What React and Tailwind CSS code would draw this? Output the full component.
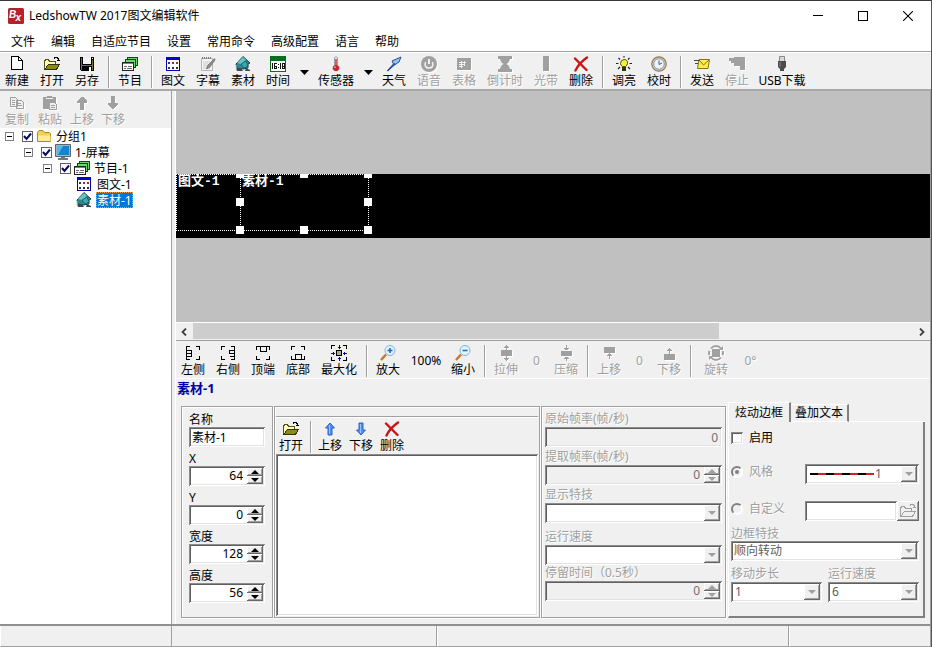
/**
 * LedshowTW editor window
 * Menu, toolbars, program tree, screen canvas and the area property panels.
 */
import React, { useState } from 'react';

const MENUS = ['文件', '编辑', '自适应节目', '设置', '常用命令', '高级配置', '语言', '帮助'];

const SUNKEN = 'shadow-[inset_1px_1px_#8c8c8c,inset_-1px_-1px_#ffffff,inset_2px_2px_#5f5f5f,inset_-2px_-2px_#e3e3e3]';
const RAISED = 'bg-[#f0f0f0] shadow-[inset_-1px_-1px_#696969,inset_1px_1px_#ffffff,inset_-2px_-2px_#a0a0a0]';
const GROOVE = 'border border-[#a0a0a0] shadow-[inset_1px_1px_#ffffff,1px_1px_#ffffff]';
const ETCHED = 'text-[#a0a0a0] [text-shadow:1px_1px_0_#ffffff]';

function Svg({ children, crisp = true, size = 16 }) {
  return (
    <svg width={size} height={size} viewBox="0 0 16 16" fill="none" aria-hidden="true"
      className="shrink-0" shapeRendering={crisp ? 'crispEdges' : 'auto'}>
      {children}
    </svg>
  );
}

/* ---------- icons ---------- */

const icons = {
  logo: (
    <Svg crisp={false}>
      <rect width="16" height="16" rx="1.5" fill="#b8202a" />
      <g fill="#fff" fontFamily="Liberation Sans, sans-serif" fontWeight="bold" fontStyle="italic">
        <text x="1" y="10" fontSize="10">B</text>
        <text x="7.500" y="13" fontSize="10">x</text>
      </g>
    </Svg>
  ),
  newFile: (
    <Svg>
      <path d="M3 1h7l3 3v10H3z" fill="#fff" />
      <path d="M2.500 .5h7l4 4v9h-11zM9.500 .5v4h4" stroke="#000" />
    </Svg>
  ),
  open: (
    <Svg>
      <path d="M1 4h4l1 1h6v3H5l-4 6z" fill="#ffffc0" />
      <path d="M.5 13.500v-9h1v-1h3v1h1v1h6v2.500" stroke="#55550a" />
      <path d="M1 13.500L4.500 8H15.500l-3 5.500z" fill="#8c8c14" stroke="#33330a" />
      <path d="M9.500 2.500h1v-1h3v1h1v2M12.500 4.500h3" stroke="#000" />
    </Svg>
  ),
  save: (
    <Svg>
      <path d="M1 1h14v14H2l-1-1z" fill="#000" />
      <path d="M2 2h1v12H2zM13 4h1v10h-1zM3 9h10v1H3z" fill="#77771c" />
      <path d="M4 1h8v7H4z" fill="#f4f4f4" />
      <path d="M10 11h2v4h-2zM13 2h1v1h-1z" fill="#fff" />
    </Svg>
  ),
  program: (
    <Svg>
      <path d="M5.500 1.500h10v8h-10z" fill="#70d470" stroke="#064d10" />
      <path d="M3 3.500h10.500v8H3z" fill="#70d470" stroke="#064d10" />
      <path d="M.5 6.500h11v8H.5z" fill="#fff" stroke="#222" />
      <path d="M1 7h10v1H1z" fill="#3fae3f" />
      <path d="M2 10.500h3M6 10.500h4M2 12.500h2M5 12.500h5" stroke="#666" />
    </Svg>
  ),
  grid: (
    <Svg>
      <path d="M1.500 1.500h13v13h-13z" fill="#fff" stroke="#0000a8" />
      <path d="M1 1h14v3H1z" fill="#0000d0" />
      <path d="M3 6h2v2H3zM3 11h2v2H3z" fill="#303080" />
      <path d="M7 6h2v2H7zM11 6h2v2h-2z" fill="#b02040" />
      <path d="M7 11h2v2H7zM11 11h2v2h-2z" fill="#203060" />
    </Svg>
  ),
  subtitle: (
    <Svg crisp={false}>
      <path d="M1.500 2.500h11v12h-11z" fill="#f4f4f4" stroke="#b4b4b4" />
      <path d="M2 2h10" stroke="#777" strokeWidth="2" strokeDasharray="1 1" />
      <path d="M3 6h7M3 8h5M3 10h5M3 12h7" stroke="#ccc" />
      <path d="M14.500 2.500L8 9l-1.500 4L10 11l5-7z" fill="#909090" stroke="#666" strokeWidth=".7" />
    </Svg>
  ),
  material: (
    <Svg crisp={false}>
      <path d="M8 .5L15 7l-2 1v4l-5 1-6-1-1-4z" fill="#2b8994" stroke="#17444d" />
      <path d="M8 1L2 7l4 1 5-4z" fill="#69c2c4" />
      <path d="M6 8l5-3 2 5-4 2z" fill="#3da9ae" stroke="#17444d" strokeWidth=".6" />
      <path d="M1 12h5l2 3H2zM11 12l4 2v1h-5z" fill="#404850" />
      <path d="M1 9v4" stroke="#b0d8da" />
    </Svg>
  ),
  clock: (
    <Svg>
      <path d="M.5 .5h15v15H.5z" fill="#fff" stroke="#126a22" />
      <path d="M0 0h16v5H0z" fill="#0d6b1e" />
      <path d="M2.500 7v6M5 7.500h2M4.500 7v6M5 10.500h2M5 12.500h2M6.500 10v3M8.500 8v1M8.500 11v1M10.500 7v6M12.500 7.500h2v5h-2zM12 10.500h2" stroke="#111" />
    </Svg>
  ),
  thermometer: (
    <Svg crisp={false}>
      <path d="M6.500 1.500q1.500-1.500 3 0v8q2.500 1.500 1.500 4q-3 3-6 0q-1-2.500 1.500-4z" fill="#f4f4f8" stroke="#9a9aa8" />
      <path d="M8 3v8" stroke="#d03030" strokeWidth="1.500" />
      <circle cx="8" cy="12" r="3" fill="#cc2430" />
      <circle cx="7" cy="11.200" r=".9" fill="#f4a0a0" />
    </Svg>
  ),
  weather: (
    <Svg crisp={false}>
      <path d="M1.500 14.500L7.500 8 6 5 15 1l-2 5-4.500 3z" fill="#8fc4f4" stroke="#234f9c" strokeLinejoin="round" />
      <path d="M1.500 15L9 7.500" stroke="#234f9c" strokeWidth="1.500" />
    </Svg>
  ),
  voice: (
    <Svg crisp={false}>
      <circle cx="8" cy="8" r="8" fill="#a0a0a0" />
      <path d="M4.500 6q-1.500 6 3.500 6q5 0 3.500-6" stroke="#f0f0f0" strokeWidth="1.500" />
      <path d="M8 3v5" stroke="#f0f0f0" strokeWidth="2" />
    </Svg>
  ),
  table: (
    <Svg>
      <path d="M1 2h14v12H1z" fill="#a0a0a0" />
      <path d="M3 6.500h7M3 8.500h6M3 10.500h4M5.500 5v7M8.500 5v5" stroke="#f0f0f0" />
    </Svg>
  ),
  hourglass: (
    <Svg crisp={false}>
      <path d="M1 0h14v3h-2q-1 4-3.500 5q2.500 1 3.500 5h2v3H1v-3h2q1-4 3.500-5Q4 7 3 3H1z" fill="#a0a0a0" />
    </Svg>
  ),
  band: (
    <Svg><path d="M5 0h6v15H5z" fill="#a0a0a0" /></Svg>
  ),
  remove: (
    <Svg crisp={false}>
      <path d="M2 2.500L13.500 14M14 1.500Q6 7 2.500 14.500" stroke="#c81414" strokeWidth="2.400" strokeLinecap="round" />
    </Svg>
  ),
  bulb: (
    <Svg crisp={false}>
      <path d="M8 3.500q4 .3 3.500 4-.4 1.500-1.800 3H6.300Q4.500 9 4.500 7.500 4.500 4 8 3.500z" fill="#f6f23a" stroke="#55550a" />
      <path d="M6 11h4v4H6z" fill="#33330a" />
      <path d="M8 0v1.500M2.500 2L4 3.500M13.500 2L12 3.500M0 7.500h2.500M13.500 7.500H16M2 13l2-2M14 13l-2-2" stroke="#222" strokeWidth="1.200" />
    </Svg>
  ),
  sync: (
    <Svg crisp={false}>
      <circle cx="8" cy="8" r="7.200" fill="#e0c28c" stroke="#8b7d68" strokeWidth="1.200" />
      <circle cx="8" cy="8" r="5.200" fill="#eaf5fd" stroke="#8ca4bc" />
      <path d="M8 4.500V8.500l3-1.500" stroke="#3d5c84" />
    </Svg>
  ),
  send: (
    <Svg crisp={false}>
      <path d="M5 3.500h10.500l-1.500 9H3.500z" fill="#fbec4c" stroke="#857414" />
      <path d="M5 4l4.500 5L15 4" stroke="#857414" />
      <path d="M0 4.500h5M1 7.500h3" stroke="#444" />
    </Svg>
  ),
  stop: (
    <Svg><path d="M0 2h5V1h11v13h-5v-4H5V7H2V5H0z" fill="#a0a0a0" /></Svg>
  ),
  usb: (
    <Svg crisp={false}>
      <path d="M5.500 .5h5v5h-5z" fill="#d8d8d8" stroke="#888" />
      <path d="M4 5h8v6l-2 2v2H6v-2l-2-2z" fill="#4b4b50" />
      <path d="M6 6v5" stroke="#88888e" />
    </Svg>
  ),
  copy: (
    <Svg>
      <path d="M1.500 2.500h5l2 2v7h-7zM7.500 5.500h5l2 2v6h-7z" fill="#f0f0f0" stroke="#a0a0a0" />
      <path d="M3 5.500h3M3 7.500h3M3 9.500h3M9 8.500h3M9 10.500h4" stroke="#a0a0a0" />
    </Svg>
  ),
  paste: (
    <Svg>
      <path d="M1 2h4V1h5v1h4v12H1z" fill="#a0a0a0" />
      <path d="M7.500 7.500h5l2 2v5h-7z" fill="#f0f0f0" stroke="#a0a0a0" />
      <path d="M4 3.500h7" stroke="#f0f0f0" />
      <path d="M9 10.500h4M9 12.500h4" stroke="#a0a0a0" />
    </Svg>
  ),
  upGray: <Svg><path d="M8 2h1l4 4v2h-3v7H6V8H3V6z" fill="#a0a0a0" /></Svg>,
  downGray: <Svg><path d="M6 1h4v7h3v1l-4 5H7L3 9V8h3z" fill="#a0a0a0" /></Svg>,
  upBlue: (
    <Svg crisp={false}>
      <path d="M8 2l4.500 5H10v7H6V7H3.500z" fill="#4f8df0" stroke="#2e64c4" strokeLinejoin="round" />
      <path d="M7.500 4v9" stroke="#9cc4fa" />
    </Svg>
  ),
  downBlue: (
    <Svg crisp={false}>
      <path d="M8 14l4.500-5H10V2H6v7H3.500z" fill="#4f8df0" stroke="#2e64c4" strokeLinejoin="round" />
      <path d="M7.500 3v9" stroke="#9cc4fa" />
    </Svg>
  ),
  folder: (
    <Svg crisp={false}>
      <path d="M1.500 13.500v-9l1.500-2h4l1.500 2h5l1 1v8z" fill="#f2cf58" stroke="#b08a1e" />
      <path d="M2 7.500h12.500v5.500H2z" fill="#fdeb9a" />
    </Svg>
  ),
  monitor: (
    <Svg crisp={false}>
      <path d="M.5 .5h15v12H.5z" fill="#9db4c4" stroke="#52687a" />
      <path d="M2 2h12v9H2z" fill="#1484cc" />
      <path d="M2 2h6L3 11H2z" fill="#4cbcea" />
      <path d="M6 13h4v1h3v2H3v-2h3z" fill="#6c7c88" />
    </Svg>
  ),
  alignLeft: (
    <Svg>
      <path d="M5 1.500H1.500v13H5M11 1.500h3.500V5M14.500 11v3.500H11M2 5.500h4.500v6H2M2 8.500h4" stroke="#000" />
    </Svg>
  ),
  alignRight: (
    <Svg>
      <path d="M11 1.500h3.500v13H11M5 1.500H1.500V5M1.500 11v3.500H5M14 5.500H9.500v3H14M9.500 11.500H14" stroke="#000" />
    </Svg>
  ),
  alignTop: (
    <Svg>
      <path d="M1.500 5V1.500h13V5M1.500 11v3.500H5M14.500 11v3.500H11M5.500 2v4.500h6V2" stroke="#000" />
    </Svg>
  ),
  alignBottom: (
    <Svg>
      <path d="M1.500 11v3.500h13V11M1.500 5V1.500H5M14.500 5V1.500H11M5.500 14V9.500h6V14" stroke="#000" />
    </Svg>
  ),
  maximize: (
    <Svg>
      <path d="M4 .5H.5V4M.5 12v3.500H4M12 .5h3.500V4M15.500 12v3.500H12" stroke="#000" />
      <path d="M5.500 5.500h5v5h-5z" fill="#a8a8a8" stroke="#000" />
      <path d="M8 0v4M6.500 2.500h3M8 12v4M6.500 13.500h3M0 8h4M2.500 6.500v3M12 8h4M13.500 6.500v3" stroke="#0a0a90" />
    </Svg>
  ),
  zoomIn: (
    <Svg crisp={false}>
      <path d="M6 9.500L1 15" stroke="#c87828" strokeWidth="2.500" />
      <circle cx="10" cy="5.500" r="5" fill="#e2f3fd" stroke="#7ab2dc" />
      <path d="M7.500 5.500h5M10 3v5" stroke="#1c68b4" strokeWidth="1.500" />
    </Svg>
  ),
  zoomOut: (
    <Svg crisp={false}>
      <path d="M6 9.500L1 15" stroke="#c87828" strokeWidth="2.500" />
      <circle cx="10" cy="5.500" r="5" fill="#e2f3fd" stroke="#7ab2dc" />
      <path d="M7.500 5.500h5" stroke="#1c68b4" strokeWidth="1.500" />
    </Svg>
  ),
  stretch: (
    <Svg>
      <path d="M3 5h11v6H3zM8 0h1v5H8zM7 1h3v1H7zM6 2h5v1H6zM8 11h1v5H8zM7 14h3v1H7zM6 13h5v1H6z" fill="#a0a0a0" />
    </Svg>
  ),
  compress: (
    <Svg>
      <path d="M3 6h11v5H3zM8 0h1v5H8zM7 4h3v1H7zM6 3h5v1H6zM8 12h1v4H8zM7 12h3v1H7zM6 13h5v1H6z" fill="#a0a0a0" />
    </Svg>
  ),
  shiftUp: (
    <Svg><path d="M3 2h11v6H3zM8 8h1v6H8zM7 9h3v1H7zM6 10h5v1H6z" fill="#a0a0a0" /></Svg>
  ),
  shiftDown: (
    <Svg><path d="M3 9h11v6H3zM8 3h1v6H8zM7 4h3v1H7zM6 5h5v1H6z" fill="#a0a0a0" /></Svg>
  ),
  rotate: (
    <Svg crisp={false}>
      <path d="M4 4h8v8H4z" fill="#a0a0a0" />
      <path d="M3 3.500Q5 1 8 1t5 2.500M3 12.500Q5 15 8 15t5-2.500" stroke="#a0a0a0" strokeWidth="2" />
      <path d="M1.500 6q-1 2 0 4M14.500 6q1 2 0 4" stroke="#a0a0a0" strokeWidth="2" />
      <path d="M15 1v4h-4zM1 15v-4h4z" fill="#a0a0a0" />
    </Svg>
  ),
  folderGray: (
    <Svg>
      <path d="M.5 13.500v-9h1v-1h3v1h1v1h6v2.500M1 13.500L4.500 8H15.500l-3 5.500z" stroke="#a0a0a0" />
      <path d="M9.500 2.500h1v-1h3v1h1v2M12.500 4.500h3" stroke="#a0a0a0" />
    </Svg>
  ),
};

/* ---------- toolbar pieces ---------- */

function ToolButton({ icon, label, disabled, width = 'w-[35px]' }) {
  return (
    <button disabled={disabled}
      className={`flex shrink-0 flex-col items-center pr-px ${width} ${disabled ? ETCHED : ''}`}>
      <span className={disabled ? '[filter:drop-shadow(1px_1px_0_#ffffff)]' : ''}>{icons[icon]}</span>
      <span className="h-4 leading-[18px] whitespace-nowrap">{label}</span>
    </button>
  );
}

function Separator() {
  return (
    <span className="flex w-2 shrink-0 justify-center self-stretch">
      <span className="w-0.5 border-l border-[#a0a0a0] bg-white" />
    </span>
  );
}

function DropArrow({ label }) {
  return (
    <button aria-label={label} className="flex w-[17px] shrink-0 items-center justify-center">
      <svg width="9" height="5" viewBox="0 0 9 5" aria-hidden="true"><path d="M0 0h9L4.500 5z" /></svg>
    </button>
  );
}

/* ---------- form pieces ---------- */

function Spinner({ id, value, disabled }) {
  const [v, setV] = useState(value);
  const fill = disabled ? '#a0a0a0' : '#000000';
  return (
    <div className={`flex h-5 p-0.5 ${SUNKEN} ${disabled ? 'bg-[#f0f0f0]' : 'bg-white'}`}>
      <input id={id} value={v} disabled={disabled} onChange={e => setV(Number(e.target.value) || 0)}
        className={`w-0 flex-1 bg-transparent pr-1 text-right leading-4 outline-none ${disabled ? 'text-[#707070]' : ''}`} />
      <div className="flex w-4 flex-col">
        {[1, -1].map(step => (
          <button key={step} disabled={disabled} onClick={() => setV(v + step)} aria-label={step > 0 ? '+' : '-'}
            className={`flex flex-1 items-center justify-center ${RAISED}`}>
            <svg width="8" height="4" viewBox="0 0 8 4" aria-hidden="true">
              <path d={step > 0 ? 'M0 4h8L4 0z' : 'M0 0h8L4 4z'} fill={fill} />
            </svg>
          </button>
        ))}
      </div>
    </div>
  );
}

function Select({ id, value = '', className = 'pl-1', children, label }) {
  return (
    <div className={`relative flex h-5 bg-white p-0.5 ${SUNKEN}`}>
      <select id={id} disabled aria-label={label} defaultValue={value}
        className={`min-w-0 flex-1 appearance-none bg-transparent leading-4 text-[#606060] opacity-100 outline-none ${className}`}>
        <option value={value}>{value}</option>
      </select>
      {children}
      <span className={`flex w-4 items-center justify-center ${RAISED}`}>
        <svg width="8" height="4" viewBox="0 0 8 4" aria-hidden="true"><path d="M0 0h8L4 4z" fill="#a0a0a0" /></svg>
      </span>
    </div>
  );
}

/* ---------- tree ---------- */

function TreeCheck({ label }) {
  return (
    <span className="grid shrink-0 place-items-center">
      <input type="checkbox" defaultChecked aria-label={label}
        className="peer col-start-1 row-start-1 size-[11px] appearance-none border border-[#606060] bg-white" />
      <svg width="9" height="9" viewBox="0 0 9 9" fill="none" aria-hidden="true"
        className="pointer-events-none invisible col-start-1 row-start-1 peer-checked:visible">
        <path d="M1 4l2.500 3L8 1.500" stroke="#0a0a60" strokeWidth="2" />
      </svg>
    </span>
  );
}

function TreeBranch({ indent, icon, label }) {
  return (
    <div className={`flex h-4 items-center ${indent}`}>
      <button aria-label="-" className="mr-2 flex size-[9px] items-center justify-center border border-[#808080] bg-white">
        <span className="h-px w-[5px] bg-black" />
      </button>
      <TreeCheck label={label} />
      <span className="mr-1 ml-[3px]">{icons[icon]}</span>
      <span className="h-4 leading-[18px]">{label}</span>
    </div>
  );
}

function TreeLeaf({ icon, label, selected }) {
  return (
    <button className="flex h-4 items-center pl-[76px]">
      {icons[icon]}
      <span className={`ml-1 h-4 px-px leading-[18px] ${selected ? 'bg-[#0078d7] text-white outline-1 -outline-offset-1 outline-dotted outline-[#e8a050]' : ''}`}>
        {label}
      </span>
    </button>
  );
}

function Sidebar() {
  return (
    <aside className="flex w-[172px] shrink-0 flex-col border-r border-[#a0a0a0] bg-white">
      <div className="flex bg-[#f0f0f0] pt-1 pb-px pl-px">
        <ToolButton icon="copy" label="复制" disabled width="w-[33px]" />
        <ToolButton icon="paste" label="粘贴" disabled width="w-[33px]" />
        <ToolButton icon="upGray" label="上移" disabled width="w-[31px]" />
        <ToolButton icon="downGray" label="下移" disabled width="w-[31px]" />
      </div>
      <div className="flex flex-col items-start">
        <TreeBranch indent="pl-[5px]" icon="folder" label="分组1" />
        <TreeBranch indent="pl-6" icon="monitor" label="1-屏幕" />
        <TreeBranch indent="pl-[43px]" icon="program" label="节目-1" />
        <TreeLeaf icon="grid" label="图文-1" />
        <TreeLeaf icon="material" label="素材-1" selected />
      </div>
    </aside>
  );
}

/* ---------- canvas ---------- */

const HANDLES = [
  '-top-[5px] -left-[5px]', '-top-[5px] left-[59px]', '-top-[5px] -right-1',
  'top-[23px] -left-[5px]', 'top-[23px] -right-1',
  '-bottom-1 -left-[5px]', '-bottom-1 left-[59px]', '-bottom-1 -right-1',
];

function Canvas() {
  return (
    <div className="flex flex-1 flex-col justify-center bg-[#c0c0c0] pb-px">
      <div className="relative h-16 overflow-hidden bg-black font-['Liberation_Mono','Noto_Sans_CJK_SC',monospace] text-[13px] leading-[14px] font-bold text-white">
        <div className="absolute top-0 left-0 h-[57px] w-[65px] border border-dotted border-white pl-px">图文-1</div>
        <div className="absolute top-0 left-16 h-[57px] w-[129px] border border-dotted border-white pl-px">
          素材-1
          {HANDLES.map(pos => <span key={pos} className={`absolute size-2 bg-white ${pos}`} />)}
        </div>
      </div>
    </div>
  );
}

function ScrollBar() {
  return (
    <div className="flex h-[18px] border-t border-white">
      <button aria-label="<" className="flex w-4 items-center justify-center">
        <svg width="6" height="8" viewBox="0 0 6 8" fill="none"><path d="M5 .5L1.500 4 5 7.500" stroke="#404040" strokeWidth="1.800" /></svg>
      </button>
      <div className="flex-1 pl-px"><div className="h-4 w-[73%] bg-[#cdcdcd]" /></div>
      <button aria-label=">" className="flex w-4 items-center justify-center">
        <svg width="6" height="8" viewBox="0 0 6 8" fill="none"><path d="M1 .5L4.500 4 1 7.500" stroke="#404040" strokeWidth="1.800" /></svg>
      </button>
    </div>
  );
}

function CanvasTools() {
  return (
    <div className="flex border-t border-b border-t-[#a0a0a0] border-b-white pt-1 pb-px">
      <ToolButton icon="alignLeft" label="左侧" />
      <ToolButton icon="alignRight" label="右侧" />
      <ToolButton icon="alignTop" label="顶端" />
      <ToolButton icon="alignBottom" label="底部" />
      <ToolButton icon="maximize" label="最大化" width="w-[47px]" />
      <Separator />
      <ToolButton icon="zoomIn" label="放大" />
      <span className="flex w-10 items-center justify-center">100%</span>
      <ToolButton icon="zoomOut" label="缩小" />
      <Separator />
      <ToolButton icon="stretch" label="拉伸" disabled />
      <span className={`flex w-[25px] items-center justify-center ${ETCHED}`}>0</span>
      <ToolButton icon="compress" label="压缩" disabled />
      <Separator />
      <ToolButton icon="shiftUp" label="上移" disabled />
      <span className={`flex w-[25px] items-center justify-center ${ETCHED}`}>0</span>
      <ToolButton icon="shiftDown" label="下移" disabled />
      <Separator />
      <ToolButton icon="rotate" label="旋转" disabled width="w-[43px]" />
      <span className={`flex w-[25px] items-center justify-center ${ETCHED}`}>0°</span>
    </div>
  );
}

/* ---------- property panels ---------- */

function PositionPanel() {
  const [name, setName] = useState('素材-1');
  const fields = [['X', 64], ['Y', 0], ['宽度', 128], ['高度', 56]];
  return (
    <section className={`mt-1 w-[92px] shrink-0 px-[7px] pt-1 ${GROOVE}`}>
      <label htmlFor="name" className="block h-4 leading-[18px]">名称</label>
      <input id="name" value={name} onChange={e => setName(e.target.value)}
        className={`block h-5 w-full bg-white px-[3px] leading-4 outline-none ${SUNKEN}`} />
      {fields.map(([label, value]) => (
        <div key={label} className="pt-[3px]">
          <label htmlFor={label} className="block h-4 leading-[18px]">{label}</label>
          <Spinner id={label} value={value} />
        </div>
      ))}
    </section>
  );
}

function FilePanel() {
  return (
    <section className={`mt-1 flex min-w-0 flex-1 flex-col p-px ${GROOVE}`}>
      <div className="h-2" />
      <div className="flex border-t border-[#a0a0a0] pt-1 shadow-[inset_0_1px_#ffffff]">
        <ToolButton icon="open" label="打开" width="w-[31px]" />
        <Separator />
        <ToolButton icon="upBlue" label="上移" width="w-[31px]" />
        <ToolButton icon="downBlue" label="下移" width="w-[31px]" />
        <ToolButton icon="remove" label="删除" width="w-[31px]" />
      </div>
      <div className={`mt-px flex-1 bg-white ${SUNKEN}`} />
    </section>
  );
}

function EffectPanel() {
  const label = `block h-4 leading-4 ${ETCHED}`;
  return (
    <section className={`mt-1 w-[185px] shrink-0 px-[3px] pt-1 pb-4 ${GROOVE}`}>
      <label htmlFor="srcRate" className={label}>原始帧率(帧/秒)</label>
      <input id="srcRate" disabled defaultValue="0"
        className={`block h-5 w-full bg-[#f0f0f0] px-1 text-right leading-4 text-[#707070] ${SUNKEN}`} />
      <div className="pt-0.5">
        <label htmlFor="rate" className={label}>提取帧率(帧/秒)</label>
        <Spinner id="rate" value={0} disabled />
      </div>
      <div className="pt-0.5">
        <label htmlFor="effect" className={label}>显示特技</label>
        <Select id="effect" />
      </div>
      <div className="pt-1.5">
        <label htmlFor="speed" className={label}>运行速度</label>
        <Select id="speed" />
      </div>
      <label htmlFor="stay" className={label}>停留时间（0.5秒）</label>
      <Spinner id="stay" value={0} disabled />
    </section>
  );
}

function Radio({ id, label, checked }) {
  return (
    <label htmlFor={id} className={`flex w-[74px] shrink-0 items-center gap-1.5 pb-1 ${ETCHED}`}>
      <span className="grid place-items-center">
        <input id={id} type="radio" name="border" disabled defaultChecked={checked}
          className="peer col-start-1 row-start-1 size-3 appearance-none rounded-full border-2 border-t-[#808080] border-r-white border-b-white border-l-[#808080] bg-[#f0f0f0]" />
        <span className="invisible col-start-1 row-start-1 size-1 rounded-full bg-[#808080] peer-checked:visible" />
      </span>
      {label}
    </label>
  );
}

function BorderPanel() {
  return (
    <section className="flex w-[197px] shrink-0 flex-col">
      <div className="flex items-end" role="tablist">
        <button role="tab" aria-selected="true"
          className="h-5 w-[63px] shrink-0 border-t border-r-2 border-l border-t-white border-r-[#808080] border-l-white leading-4">
          炫动边框
        </button>
        <button role="tab" aria-selected="false"
          className="h-[18px] w-[58px] shrink-0 border-t border-r-2 border-b border-t-white border-r-[#808080] border-b-white leading-4">
          叠加文本
        </button>
        <span className="flex-1 border-b border-white" />
      </div>
      <div className="flex flex-1 flex-col border-r-2 border-b-2 border-l border-r-[#808080] border-b-[#808080] border-l-white pr-1 pl-0.5">
        <label className="mt-2 flex h-4 items-center gap-1.5">
          <input type="checkbox" className={`size-3 appearance-none bg-white ${SUNKEN}`} />
          启用
        </label>
        <div className="mt-[18px] flex items-center">
          <Radio id="style" label="风格" checked />
          <div className="min-w-0 flex-1">
            <Select value="1" label="风格" className="pl-[68px]">
              <svg width="64" height="2" viewBox="0 0 64 2" className="absolute top-[9px] left-[5px]" aria-hidden="true">
                <path d="M0 1h64" stroke="#000" strokeWidth="2" />
                <path d="M8 1h56" stroke="#d81e1e" strokeWidth="2" strokeDasharray="8 8" />
              </svg>
            </Select>
          </div>
        </div>
        <div className="mt-[17px] flex items-center">
          <Radio id="custom" label="自定义" />
          <input disabled aria-label="自定义" className={`h-5 w-0 flex-1 bg-white ${SUNKEN}`} />
          <button disabled aria-label="打开" className={`flex h-5 w-[22px] items-center justify-center ${RAISED}`}>{icons.folderGray}</button>
        </div>
        <label htmlFor="trick" className={`mt-1 h-4 leading-[18px] ${ETCHED}`}>边框特技</label>
        <Select id="trick" value="顺向转动" className="pl-px" />
        <div className="mt-1 grid grid-cols-2 gap-1.5">
          <div>
            <label htmlFor="step" className={`block h-[17px] leading-[18px] ${ETCHED}`}>移动步长</label>
            <Select id="step" value="1" className="pl-0.5" />
          </div>
          <div>
            <label htmlFor="runSpeed" className={`block h-[17px] leading-[18px] ${ETCHED}`}>运行速度</label>
            <Select id="runSpeed" value="6" className="pl-0.5" />
          </div>
        </div>
      </div>
    </section>
  );
}

function TitleBar() {
  return (
    <header className="flex h-[29px] items-center pr-px pl-2">
      {icons.logo}
      <h1 className="ml-[5px] flex-1 text-[12px]">LedshowTW 2017图文编辑软件</h1>
      <button aria-label="最小化" className="flex w-[45px] justify-center"><span className="h-px w-2.5 bg-black" /></button>
      <button aria-label="最大化" className="flex w-[45px] justify-center"><span className="size-2.5 border border-black" /></button>
      <button aria-label="关闭" className="flex w-[45px] justify-center">
        <svg width="10" height="10" viewBox="0 0 10 10"><path d="M0 0l10 10M10 0L0 10" stroke="#000" strokeWidth="1.100" /></svg>
      </button>
    </header>
  );
}

function MainToolbar() {
  return (
    <div className="flex border-t border-b-2 border-t-[#a0a0a0] border-b-[#a8a8a8] bg-[#f0f0f0] pt-1 pb-px shadow-[inset_0_1px_#ffffff]">
      <ToolButton icon="newFile" label="新建" />
      <ToolButton icon="open" label="打开" />
      <ToolButton icon="save" label="另存" />
      <Separator />
      <ToolButton icon="program" label="节目" />
      <Separator />
      <ToolButton icon="grid" label="图文" />
      <ToolButton icon="subtitle" label="字幕" />
      <ToolButton icon="material" label="素材" />
      <ToolButton icon="clock" label="时间" />
      <DropArrow label="时间" />
      <ToolButton icon="thermometer" label="传感器" width="w-[47px]" />
      <DropArrow label="传感器" />
      <ToolButton icon="weather" label="天气" />
      <ToolButton icon="voice" label="语音" disabled />
      <ToolButton icon="table" label="表格" disabled />
      <ToolButton icon="hourglass" label="倒计时" disabled width="w-[47px]" />
      <ToolButton icon="band" label="光带" disabled />
      <ToolButton icon="remove" label="删除" />
      <Separator />
      <ToolButton icon="bulb" label="调亮" />
      <ToolButton icon="sync" label="校时" />
      <Separator />
      <ToolButton icon="send" label="发送" />
      <ToolButton icon="stop" label="停止" disabled />
      <ToolButton icon="usb" label="USB下载" width="w-[55px]" />
    </div>
  );
}

export default function App() {
  return (
    <div className="flex min-h-screen flex-col border-t border-r border-t-[#3a3a3e] border-r-[#55555a] bg-white font-['Noto_Sans','Noto_Sans_CJK_SC',sans-serif] text-[12px] leading-4 text-black">
      <TitleBar />
      <nav className="flex h-[21px] items-center pt-0.5 pl-[3px]">
        {MENUS.map(m => <button key={m} className="px-2">{m}</button>)}
      </nav>
      <MainToolbar />
      <div className="flex flex-1 border-r border-[#a0a0a0] bg-[#f0f0f0]">
        <Sidebar />
        <div className="w-1 shrink-0 border-r border-white" />
        <main className="flex min-w-0 flex-1 flex-col">
          <Canvas />
          <ScrollBar />
          <CanvasTools />
          <h2 className="h-4 pl-px text-[13px] leading-[18px] font-bold text-[#0000a8]">素材-1</h2>
          <div className="mt-[7px] flex px-[5px] pb-1.5">
            <PositionPanel />
            <span className="w-px" />
            <FilePanel />
            <span className="w-px" />
            <EffectPanel />
            <span className="w-0.5" />
            <BorderPanel />
          </div>
        </main>
      </div>
      <footer className="flex h-[23px] border-t-2 border-[#909090] bg-[#f0f0f0]">
        <span className="w-[172px] border-r border-b border-l border-[#a0a0a0] border-l-white" />
        <span className="w-[265px] border-r border-b border-[#a0a0a0]" />
        <span className="flex-1 border-r border-b border-l border-[#a0a0a0] border-l-white" />
        <span className="w-[142px] border-r border-b border-l border-[#a0a0a0] border-l-white" />
      </footer>
    </div>
  );
}
